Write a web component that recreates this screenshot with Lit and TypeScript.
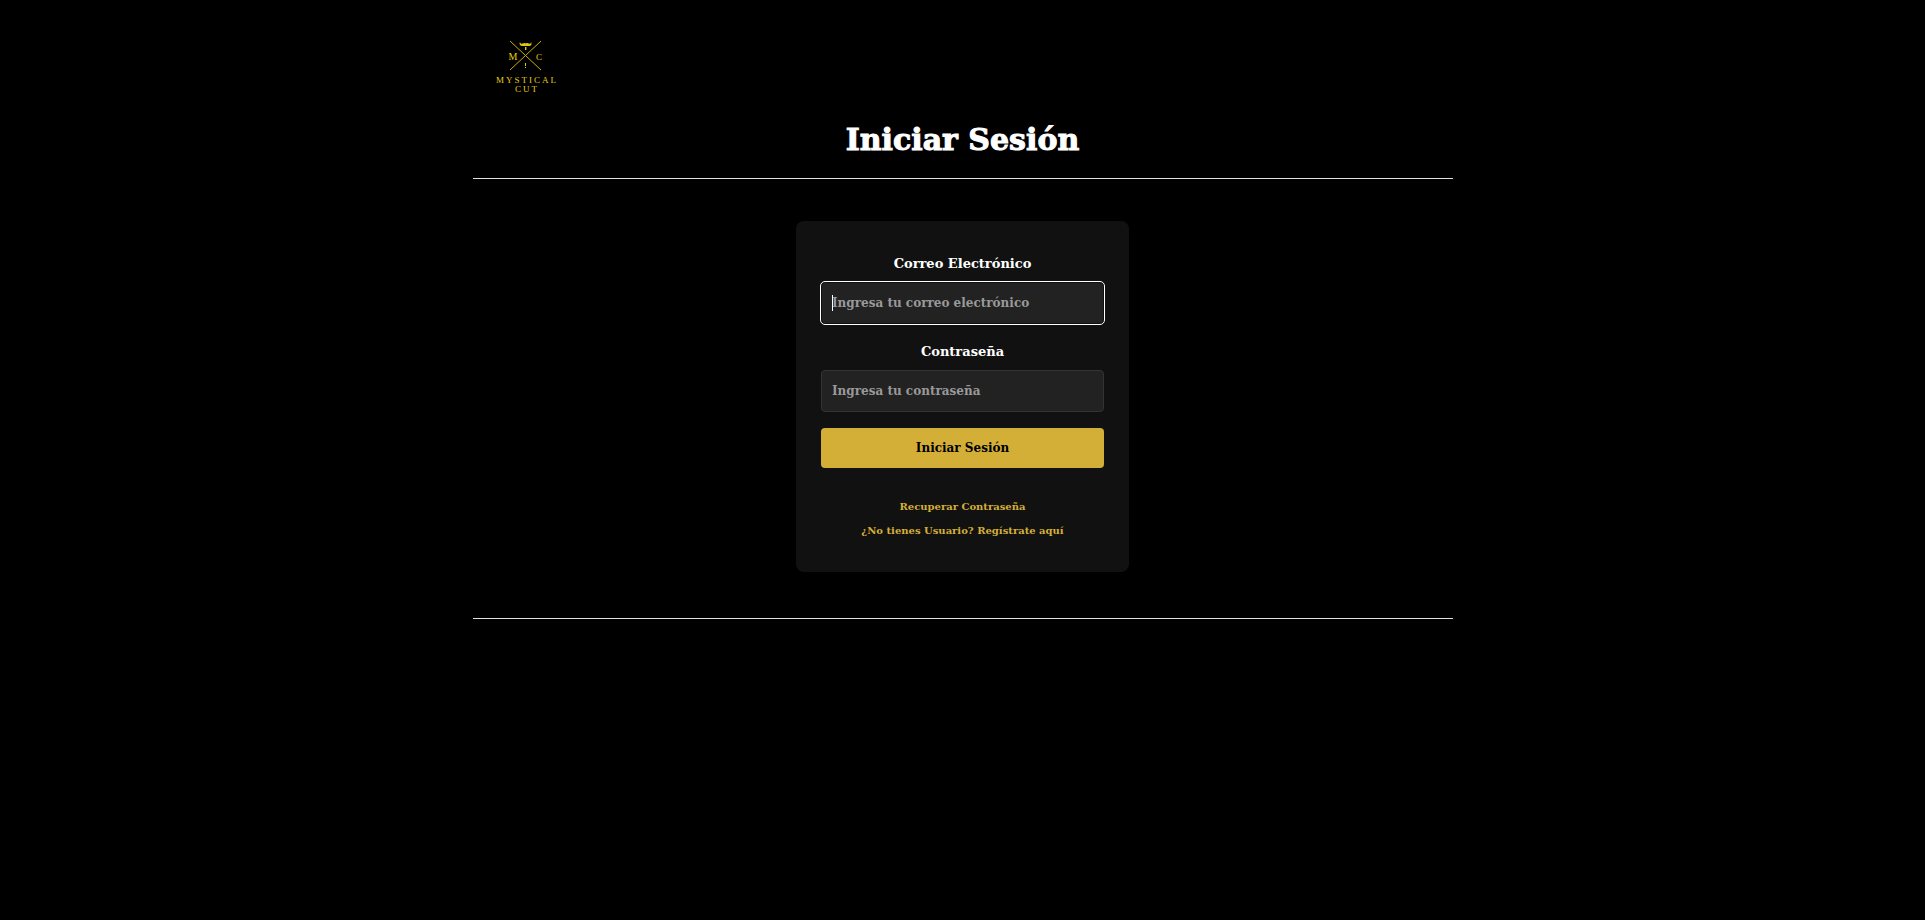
import { LitElement, html, css } from "lit";
import { customElement } from "lit/decorators.js";

@customElement("brand-logo")
class BrandLogo extends LitElement {
  static styles = css`
    :host {
      display: block;
      width: 100px;
    }
    .logo {
      display: block;
      width: 100%;
    }
    .mark {
      fill: none;
      stroke: #c8b00c;
      stroke-width: 1;
    }
    .solid {
      fill: #e0c60e;
    }
    .letters {
      fill: #e8ce10;
      font-family: "Liberation Serif", serif;
      font-weight: 400;
      text-anchor: middle;
    }
  `;

  render() {
    return html`
      <svg class="logo" viewBox="0 0 100 100" role="img" aria-label="Mystical Cut">
        <path class="mark" d="M34 25L65 54M65 25L34 54" />
        <path
          class="solid"
          d="M44 26C44.300 28 46 28 47.500 27.300C48.500 26.800 49.300 27 49.700 27.500C50.100 27 51 26.800 52 27.300C53.500 28 55 28 55 26C56.500 28.500 54.500 30.500 52 30H47.500C45 30.500 42.500 28.500 44 26Z"
        />
        <path class="solid" d="M49 31H50.400V34H49ZM49 47H50V50H49ZM49 51H50V52H49Z" />
        <g class="letters">
          <text x="37" y="44" font-size="10">M</text>
          <text x="63" y="44" font-size="9">C</text>
          <text x="51" y="67" font-size="9" letter-spacing="2">MYSTICAL</text>
          <text x="51" y="76" font-size="9" letter-spacing="2">CUT</text>
        </g>
      </svg>
    `;
  }
}

@customElement("app-root")
class AppRoot extends LitElement {
  static styles = css`
    :host {
      display: block;
      min-height: 100vh;
      background: #000;
      color: #fff;
      font-family: "DejaVu Serif", serif;
      font-weight: 700;
    }
    * {
      box-sizing: border-box;
    }
    .page {
      max-width: 980px;
      margin: 0 auto;
      padding-top: 16px;
    }
    .header {
      border-bottom: 1px solid #dee2e6;
      padding-bottom: 16px;
    }
    .brand {
      margin-left: 3px;
    }
    .title {
      margin: 0;
      padding-top: 2px;
      font-size: 30px;
      line-height: 44px;
      text-align: center;
      -webkit-text-stroke: 1px currentColor;
    }
    .content {
      padding: 42px 16px 46px;
      border-bottom: 1px solid #dee2e6;
    }
    .card {
      width: 100%;
      max-width: 333px;
      margin: 0 auto;
      padding: 31px 25px 29px;
      border-radius: 8px;
      background: #111;
      display: flex;
      flex-direction: column;
    }
    .label {
      font-size: 13px;
      line-height: 24px;
      text-align: center;
      margin-bottom: 6px;
    }
    .control {
      position: relative;
      margin-bottom: 16px;
    }
    .field {
      display: block;
      width: 100%;
      height: 42px;
      margin: 0;
      padding: 0 10px;
      border: 1px solid #333;
      border-radius: 4px;
      background: #222;
      color: #fff;
      font: inherit;
      font-size: 12px;
    }
    .field::placeholder {
      color: #999;
      opacity: 1;
    }
    .field:focus {
      border-color: #101010;
      outline: 1px solid #fff;
    }
    .field:focus:placeholder-shown {
      caret-color: transparent;
    }
    .caret {
      display: none;
      position: absolute;
      left: 11px;
      top: 13px;
      width: 1px;
      height: 16px;
      background: #fff;
      pointer-events: none;
    }
    .field:focus:placeholder-shown + .caret {
      display: block;
    }
    .submit {
      height: 40px;
      border: 0;
      border-radius: 4px;
      background: #d4af37;
      color: #000;
      font: inherit;
      font-size: 12px;
      cursor: pointer;
    }
    .links {
      display: flex;
      flex-direction: column;
      align-items: center;
      margin-top: 27px;
    }
    .link {
      color: #d4af37;
      font-size: 10px;
      line-height: 24px;
      text-decoration: none;
    }
  `;

  firstUpdated() {
    this.renderRoot.querySelector<HTMLInputElement>("#email")?.focus();
  }

  render() {
    return html`
      <div class="page">
        <header class="header">
          <brand-logo class="brand"></brand-logo>
          <h1 class="title">Iniciar Sesión</h1>
        </header>
        <main class="content">
          <form class="card" @submit=${(e: Event) => e.preventDefault()}>
            <label class="label" for="email">Correo Electrónico</label>
            <div class="control">
              <input class="field" id="email" type="email" placeholder="Ingresa tu correo electrónico" />
              <span class="caret"></span>
            </div>
            <label class="label" for="password">Contraseña</label>
            <div class="control">
              <input class="field" id="password" type="password" placeholder="Ingresa tu contraseña" />
              <span class="caret"></span>
            </div>
            <button class="submit" type="submit">Iniciar Sesión</button>
            <nav class="links">
              <a class="link" href="#recuperar">Recuperar Contraseña</a>
              <a class="link" href="#registro">¿No tienes Usuario? Regístrate aquí</a>
            </nav>
          </form>
        </main>
      </div>
    `;
  }
}
